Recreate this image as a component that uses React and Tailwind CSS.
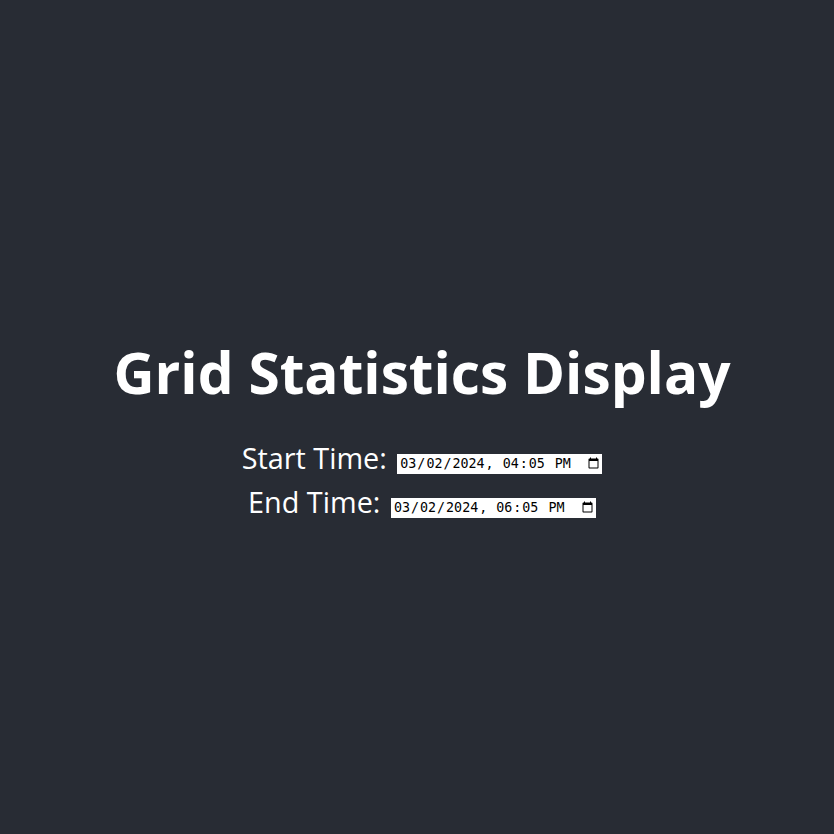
export default function App() {
  return (
    <div className="min-h-screen bg-[#282c34] flex flex-col items-center justify-center pl-[10px] text-white text-[28.8px] font-['Open_Sans',sans-serif]">
      <h1 className="text-[56.8px] font-bold mt-[36px] mb-[38px] leading-[64px]">Grid Statistics Display</h1>
      <div className="flex items-center h-[44px]">
        <label htmlFor="start" className="leading-[44px] -translate-y-[6px] mr-[3px]">Start Time:&nbsp;</label>
        <input
          id="start"
          type="datetime-local"
          defaultValue="2024-03-02T16:05"
          className="bg-white text-black w-[205px] h-[20px] pl-[2px] pr-0 text-[13.33px] font-['DejaVu_Sans_Mono',monospace] leading-normal"
        />
      </div>
      <div className="flex items-center h-[44px]">
        <label htmlFor="end" className="leading-[44px] -translate-y-[6px] mr-[3px]">End Time:&nbsp;</label>
        <input
          id="end"
          type="datetime-local"
          defaultValue="2024-03-02T18:05"
          className="bg-white text-black w-[205px] h-[20px] pl-[2px] pr-0 text-[13.33px] font-['DejaVu_Sans_Mono',monospace] leading-normal"
        />
      </div>
    </div>
  );
}
